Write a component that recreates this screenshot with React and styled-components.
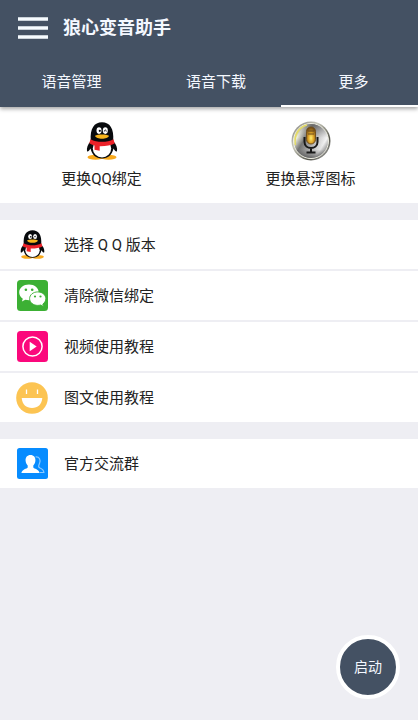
import React from "react";
import styled, { createGlobalStyle } from "styled-components";

const slate = "#445163";

const GlobalStyle = createGlobalStyle`
  *, *::before, *::after { box-sizing: border-box; }
  body {
    margin: 0;
    background: #eeeef3;
    color: #222;
    font-family: Roboto, "Noto Sans CJK SC", sans-serif;
    font-size: 15px;
    line-height: 20px;
  }
  button { font: inherit; color: inherit; border: 0; padding: 0; background: none; cursor: pointer; }
  svg { display: block; flex: none; }
`;

const Page = styled.div`
  min-height: 100vh;
`;

const Header = styled.header`
  position: relative;
  background: ${slate};
  color: #f4f8ff;
  box-shadow: 0 2px 4px rgba(0, 0, 0, 0.35);
`;

const TitleBar = styled.div`
  display: flex;
  align-items: center;
  gap: 15px;
  height: 56px;
  padding: 0 18px;
`;

const MenuButton = styled.button`
  display: flex;
`;

const Title = styled.h1`
  margin: 0;
  font-size: 18px;
  line-height: 24px;
  font-weight: 700;
`;

const Tabs = styled.div`
  display: flex;
  height: 51px;
`;

const Tab = styled.button`
  position: relative;
  flex: ${(p) => p.$grow} 1 0;
  &[aria-selected="true"]::after {
    content: "";
    position: absolute;
    left: -8px;
    right: 0;
    bottom: 0;
    height: 2px;
    background: #fff;
  }
`;

const Shortcuts = styled.section`
  display: grid;
  grid-template-columns: 203fr 215fr;
  background: #fff;
  height: 96px;
`;

const Shortcut = styled.button`
  display: flex;
  flex-direction: column;
  align-items: center;
  gap: 8px;
  padding-top: 14px;
`;

const ShortcutIcon = styled.span`
  display: flex;
  align-items: center;
  justify-content: center;
  height: 40px;
`;

const Group = styled.section`
  display: grid;
  gap: 2px;
  margin-top: 17px;
`;

const Row = styled.button`
  display: flex;
  align-items: center;
  gap: 16px;
  height: 49px;
  padding: 0 16px;
  background: #fff;
  text-align: left;
`;

const RowIcon = styled.span`
  display: flex;
  justify-content: center;
  width: 32px;
`;

const StartButton = styled.button`
  position: fixed;
  right: 18px;
  bottom: 21px;
  width: 64px;
  height: 64px;
  && {
    border: 4px solid #fff;
    background: ${slate};
    color: #f4f8ff;
    font-size: 14px;
  }
  border-radius: 50%;
`;

const MenuIcon = () => (
  <svg width="30" height="22" viewBox="0 0 30 22" aria-hidden="true">
    <path d="M0 2h30M0 11h30M0 20h30" stroke="#f6fbff" strokeWidth="3.6" />
  </svg>
);

const Penguin = ({ width, height }) => (
  <svg width={width} height={height} viewBox="0 0 32 38" preserveAspectRatio="none" aria-hidden="true">
    <ellipse cx="9.5" cy="35.2" rx="8" ry="2.5" fill="#f8a91c" />
    <ellipse cx="22.5" cy="35.2" rx="8" ry="2.5" fill="#f8a91c" />
    <path d="M5 19C1.5 22.500 .5 26 1 29c.5 1.500 2 0 3.500-2.500C6 33 10 36.500 16 36.500S26 33 27.500 26.500C29 29 30.500 30.500 31 29c.5-3-.5-6.500-4-10z" fill="#080a0d" />
    <ellipse cx="16" cy="26.500" rx="9.200" ry="9" fill="#fff" />
    <path d="M4.800 19C3.800 6.500 8.200.3 16 .3S28.200 6.500 27.200 19c-5 4-17.400 4-22.400 0z" fill="#080a0d" />
    <path d="M4.500 17.200c6.500 3.500 16.500 3.500 23 0l1.200 4.300c-4 2-9 2.800-15 2.700v4.600l-5.200-1v-4.400c-2-.5-3.700-1.200-5.200-2.200z" fill="#ec2229" />
    <ellipse cx="13" cy="8.600" rx="2.500" ry="3.300" fill="#fff" />
    <ellipse cx="19.300" cy="8.600" rx="2.500" ry="3.300" fill="#fff" />
    <circle cx="13.800" cy="8.800" r="1.100" fill="#080a0d" />
    <path d="M18.300 9.500c.2-2 1.800-2 2 0" fill="none" stroke="#080a0d" strokeWidth=".9" />
    <path d="M9 13.800c3-1.800 11-1.800 14 0-1 4-13 4-14 0z" fill="#f8b51d" />
  </svg>
);

const MicIcon = () => (
  <svg width="40" height="40" viewBox="0 0 40 40" aria-hidden="true">
    <defs>
      <linearGradient id="rim" x1="0" y1="0" x2="1" y2="1">
        <stop offset="0" stopColor="#777" />
        <stop offset=".35" stopColor="#c9c9bb" />
        <stop offset=".7" stopColor="#55554d" />
        <stop offset="1" stopColor="#b5b5b5" />
      </linearGradient>
      <linearGradient id="face" x1="0" y1=".2" x2="1" y2=".8">
        <stop offset="0" stopColor="#d9d36b" />
        <stop offset=".16" stopColor="#eeeede" />
        <stop offset=".34" stopColor="#777" />
        <stop offset=".6" stopColor="#c4c4c4" />
        <stop offset=".8" stopColor="#f6f6f6" />
        <stop offset="1" stopColor="#737373" />
      </linearGradient>
      <linearGradient id="shade" x1="0" y1="0" x2="0" y2="1">
        <stop offset="0" stopColor="#555" stopOpacity=".55" />
        <stop offset=".4" stopColor="#888" stopOpacity="0" />
        <stop offset=".75" stopColor="#333" stopOpacity=".1" />
        <stop offset="1" stopColor="#222" stopOpacity=".65" />
      </linearGradient>
      <radialGradient id="glow" cx=".5" cy=".65" r=".65">
        <stop offset="0" stopColor="#ffef70" />
        <stop offset=".45" stopColor="#dfa427" />
        <stop offset="1" stopColor="#654212" />
      </radialGradient>
    </defs>
    <circle cx="20" cy="20" r="19.500" fill="url(#rim)" />
    <circle cx="20" cy="20" r="17.500" fill="url(#face)" stroke="#eeeee2" strokeWidth="1" />
    <circle cx="20" cy="20" r="17" fill="url(#shade)" />
    <path d="M4.500 24C2.500 14 8 6 16 4" fill="none" stroke="#e5dc65" strokeWidth="1.500" />
    <rect x="15.500" y="6" width="9" height="17" rx="4.500" fill="url(#glow)" stroke="#72511f" />
    <path d="M17 10h6M17 13h6" stroke="#69491c" strokeWidth="1" />
    <path d="M13.500 16v5c0 8 13 8 13 0v-5M20 27v4M15.500 31.500h9" fill="none" stroke="#181818" strokeWidth="2" />
  </svg>
);

const WechatIcon = () => (
  <svg width="31" height="31" viewBox="0 0 31 31" aria-hidden="true">
    <rect width="31" height="31" rx="3.500" fill="#3cb034" />
    <path d="M12 4.500c-5.600 0-9.800 3.500-9.800 8 0 2.600 1.400 4.800 3.600 6.200l-.9 2.900 3.400-1.800c1.200.3 2.400.5 3.700.5 5.500 0 9.700-3.500 9.700-7.900S17.500 4.500 12 4.500z" fill="#fff" />
    <path d="M20.800 11.900c-4.700 0-8.200 3-8.200 6.700 0 3.800 3.500 6.800 8.200 6.800 1 0 2-.2 2.900-.4l2.900 1.600-.8-2.500c1.900-1.300 3-3.300 3-5.500 0-3.700-3.400-6.700-8-6.700z" fill="#fff" stroke="#3cb034" strokeWidth=".9" />
    <g fill="#3cb034">
      <circle cx="8.900" cy="9.700" r="1.300" /><circle cx="15.200" cy="9.700" r="1.300" />
      <circle cx="18" cy="16.500" r="1.100" /><circle cx="23.500" cy="16.500" r="1.100" />
    </g>
  </svg>
);

const VideoIcon = () => (
  <svg width="31" height="31" viewBox="0 0 31 31" aria-hidden="true">
    <rect width="31" height="31" rx="3.500" fill="#fb087c" />
    <circle cx="15.500" cy="15.500" r="9.600" fill="none" stroke="#fff" strokeWidth="1.500" />
    <path d="M12.700 10.800v9.400l7-4.700z" fill="#fff" />
  </svg>
);

const SmileIcon = () => (
  <svg width="32" height="32" viewBox="0 0 32 32" aria-hidden="true">
    <circle cx="16" cy="16" r="15.800" fill="#fcc452" />
    <path d="M10.500 7.500v4.500M21.500 7.500v4.500" stroke="#fff" strokeWidth="1.300" />
    <path d="M5.700 16h20.600c-.5 6.500-4.500 10-10.300 10S6.200 22.500 5.700 16z" fill="#fff" />
  </svg>
);

const PeopleIcon = () => (
  <svg width="31" height="31" viewBox="0 0 31 31" aria-hidden="true">
    <rect width="31" height="31" rx="2.500" fill="#078cff" />
    <path d="M18.500 9c4-.5 5.500 3 4 6.500-1 2.500-1.500 3.500.5 4.500 2.500 1 3.700 2 3.900 4.500h-4" fill="none" stroke="#8bc9ff" strokeWidth="1.200" />
    <path d="M13.500 7c-3.200 0-5.200 2.400-4.900 5.700.2 2.300 1 3.600 2.100 4.700v2c-.8 1.500-5.700 1.500-6.300 5.600h18.200c-.6-4.100-5.500-4.100-6.300-5.600v-2c1.100-1.100 1.900-2.400 2.100-4.700.3-3.300-1.700-5.700-4.900-5.700z" fill="#fff" />
  </svg>
);

const tabs = [
  { label: "语音管理", grow: 143 },
  { label: "语音下载", grow: 146 },
  { label: "更多", grow: 129, selected: true },
];

const groups = [
  [
    { label: "选择 Q Q 版本", icon: <Penguin width={25} height={29} /> },
    { label: "清除微信绑定", icon: <WechatIcon /> },
    { label: "视频使用教程", icon: <VideoIcon /> },
    { label: "图文使用教程", icon: <SmileIcon /> },
  ],
  [{ label: "官方交流群", icon: <PeopleIcon /> }],
];

export default function App() {
  return (
    <Page>
      <GlobalStyle />
      <Header>
        <TitleBar>
          <MenuButton aria-label="菜单"><MenuIcon /></MenuButton>
          <Title>狼心变音助手</Title>
        </TitleBar>
        <Tabs role="tablist">
          {tabs.map((t) => (
            <Tab key={t.label} role="tab" aria-selected={!!t.selected} $grow={t.grow}>
              {t.label}
            </Tab>
          ))}
        </Tabs>
      </Header>
      <main>
        <Shortcuts>
          <Shortcut>
            <ShortcutIcon><Penguin width={32} height={38} /></ShortcutIcon>
            更换QQ绑定
          </Shortcut>
          <Shortcut>
            <ShortcutIcon><MicIcon /></ShortcutIcon>
            更换悬浮图标
          </Shortcut>
        </Shortcuts>
        {groups.map((rows) => (
          <Group key={rows[0].label}>
            {rows.map((r) => (
              <Row key={r.label}>
                <RowIcon>{r.icon}</RowIcon>
                {r.label}
              </Row>
            ))}
          </Group>
        ))}
      </main>
      <StartButton>启动</StartButton>
    </Page>
  );
}
